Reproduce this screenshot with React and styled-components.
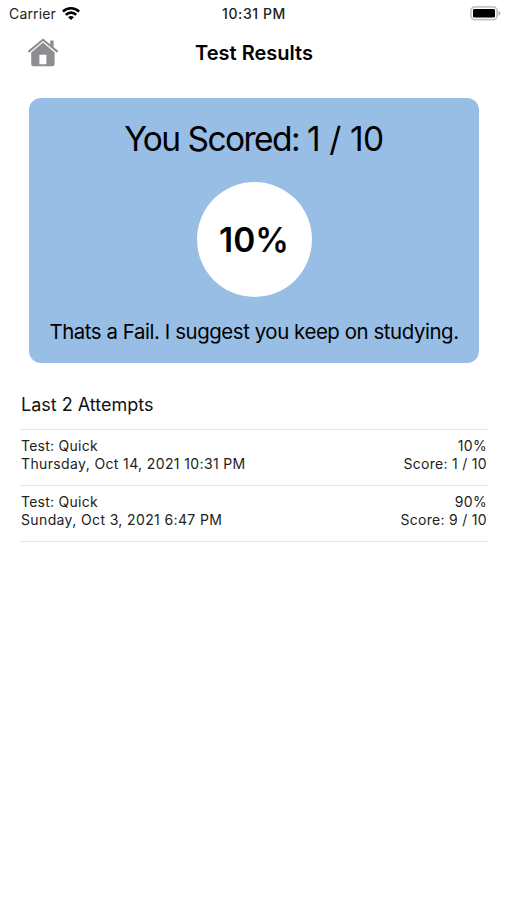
import React from 'react'
import styled, { createGlobalStyle } from 'styled-components'

const attempts = [
  { test: 'Quick', date: 'Thursday, Oct 14, 2021 10:31 PM', percent: 10, correct: 1, total: 10 },
  { test: 'Quick', date: 'Sunday, Oct 3, 2021 6:47 PM', percent: 90, correct: 9, total: 10 },
]

const WifiIcon = () => (
  <svg width="18" height="14" viewBox="0 0 18 14" fill="none" stroke="#000" strokeWidth="2.6">
    <path d="M0.9 4.6C5.3 0.2 12.7 0.2 17.1 4.6" />
    <path d="M3.8 7.9C6.7 4.9 11.3 4.9 14.2 7.9" />
    <path d="M9 13.1L6.1 10.3C7.7 8.7 10.3 8.7 11.9 10.3Z" fill="#000" stroke="none" />
  </svg>
)

const BatteryIcon = () => (
  <svg width="31" height="15" viewBox="0 0 31 15">
    <rect x="0.9" y="0.9" width="26.2" height="12.8" rx="4" fill="#fff" stroke="#c4c4c4" strokeWidth="1.7" />
    <rect x="3" y="3" width="22" height="8.6" rx="1.4" fill="#000" />
    <path d="M28.5 5C30.9 6 30.9 8.6 28.5 9.6Z" fill="#a8a8a8" />
  </svg>
)

const HomeIcon = () => (
  <svg width="32" height="30" viewBox="0 0 32 30">
    <path d="M23.2 2.4H26.6V10L23.2 7Z" fill="#8e8e92" />
    <path d="M1.3 13.9L16 1.7L30.7 13.9" fill="none" stroke="#8e8e92" strokeWidth="2.1" strokeLinejoin="round" />
    <path
      d="M16 4.6L27.6 14.4V26Q27.6 28.2 25.4 28.2H6.4Q4.2 28.2 4.2 26V14.4ZM12.4 16.8V26.2H19.4V16.8Z"
      fill="#8e8e92"
      fillRule="evenodd"
    />
  </svg>
)

const AttemptItem = ({ attempt }) => (
  <AttemptRow>
    <AttemptColumn>
      <AttemptText $spacing="0.25px">Test: {attempt.test}</AttemptText>
      <AttemptText $spacing="0.37px">{attempt.date}</AttemptText>
    </AttemptColumn>
    <AttemptColumn $align="right">
      <AttemptText $spacing="0.3px">{attempt.percent}%</AttemptText>
      <AttemptText $spacing="0.3px">Score: {attempt.correct} / {attempt.total}</AttemptText>
    </AttemptColumn>
  </AttemptRow>
)

const App = () => {
  return (
    <Screen>
      <GlobalStyle />
      <StatusBar>
        <Carrier>
          <span>Carrier</span>
          <WifiIcon />
        </Carrier>
        <Clock>10:31 PM</Clock>
        <Battery>
          <BatteryIcon />
        </Battery>
      </StatusBar>
      <Header>
        <HomeButton aria-label="Home">
          <HomeIcon />
        </HomeButton>
        <Title>Test Results</Title>
      </Header>
      <ScoreCard>
        <ScoreHeading>You Scored: <ScoreValue>1 / 10</ScoreValue></ScoreHeading>
        <PercentCircle>10%</PercentCircle>
        <Verdict>Thats a Fail. I suggest you keep on studying.</Verdict>
      </ScoreCard>
      <Attempts>
        <AttemptsHeading>Last 2 Attempts</AttemptsHeading>
        {attempts.map((attempt) => (
          <AttemptItem key={attempt.date} attempt={attempt} />
        ))}
      </Attempts>
    </Screen>
  )
}

const GlobalStyle = createGlobalStyle`
  * {
    box-sizing: border-box;
  }

  body {
    margin: 0;
    background: #fff;
    color: #000;
    font-family: Inter, 'Liberation Sans', sans-serif;
  }

  svg {
    display: block;
  }
`

const Screen = styled.main`
  width: 507px;
  height: 900px;
  background: #fff;
  overflow: hidden;
`

const StatusBar = styled.div`
  display: grid;
  grid-template-columns: 1fr auto 1fr;
  align-items: center;
  height: 27px;
  padding: 0 6px 0 9px;
  font-size: 14px;
`

const Carrier = styled.div`
  display: flex;
  align-items: center;
  gap: 6px;
  letter-spacing: 0.15px;
  color: #222;
`

const Clock = styled.div`
  margin-left: -2px;
  font-weight: 550;
  font-size: 14px;
  letter-spacing: 0.6px;
  color: #222;
`

const Battery = styled.div`
  display: flex;
  justify-content: flex-end;
`

const Header = styled.header`
  display: grid;
  grid-template-columns: 80px 1fr 80px;
  align-items: center;
  height: 51px;
`

const HomeButton = styled.button`
  width: 32px;
  margin-left: 27px;
  padding: 0;
  border: none;
  background: none;
`

const Title = styled.h1`
  margin: 0 0 0 1px;
  padding-top: 1px;
  font-size: 20px;
  font-weight: 600;
  line-height: 25px;
  text-align: center;
`

const ScoreCard = styled.section`
  display: flex;
  flex-direction: column;
  align-items: center;
  width: 450px;
  height: 265px;
  margin: 20.4px 0 0 29px;
  padding-top: 20px;
  border-radius: 12px;
  background: #98bee5;
`

const ScoreHeading = styled.h2`
  margin: 0;
  font-size: 33.5px;
  font-weight: 400;
  line-height: 42px;
  letter-spacing: -1.55px;
  white-space: nowrap;
`

const ScoreValue = styled.span`
  letter-spacing: -0.4px;
`

const PercentCircle = styled.div`
  display: flex;
  align-items: center;
  justify-content: center;
  width: 115px;
  height: 115px;
  margin-top: 22px;
  border-radius: 50%;
  background: #fff;
  font-size: 33.5px;
  font-weight: 600;
`

const Verdict = styled.p`
  margin: 22px 0 0;
  font-size: 20.4px;
  line-height: 26px;
  letter-spacing: -0.42px;
  white-space: nowrap;
`

const Attempts = styled.section`
  margin: 0 19px 0 20px;
`

const AttemptsHeading = styled.h3`
  margin: 0;
  padding: 30px 0 11.6px 1px;
  border-bottom: 1px solid #e6e6e6;
  font-size: 18px;
  font-weight: 400;
  line-height: 24px;
  color: #111;
`

const AttemptRow = styled.div`
  display: flex;
  justify-content: space-between;
  height: 56px;
  padding: 7.5px 1px 0;
  border-bottom: 1px solid #e6e6e6;
`

const AttemptColumn = styled.div`
  text-align: ${({ $align }) => $align || 'left'};
`

const AttemptText = styled.p`
  margin: 0;
  font-size: 14px;
  line-height: 17.5px;
  letter-spacing: ${({ $spacing }) => $spacing || '0'};
  color: #222;
`

export default App
